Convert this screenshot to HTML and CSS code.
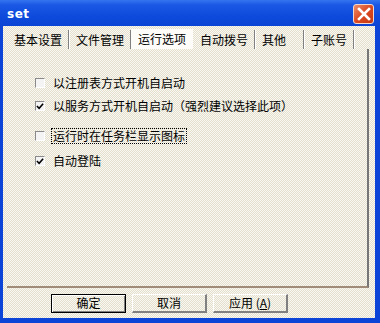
FILE: index.html
```html
<!DOCTYPE html>
<html>
<head>
<meta charset="utf-8">
<link rel="stylesheet" href="styles.css">
</head>
<body>
<div class="window">
  <div class="titlebar">
    <span class="title">set</span>
    <span class="close">
      <svg width="14" height="14" viewBox="0 0 14 14"><path d="M2 2 L12 12 M12 2 L2 12" stroke="#fff" stroke-width="2.6" stroke-linecap="square"/></svg>
    </span>
  </div>
  <div class="client">
    <div class="tabs">
      <span class="tab">基本设置</span>
      <span class="tab">文件管理</span>
      <span class="tab active">运行选项</span>
      <span class="tab">自动拨号</span>
      <span class="tab">其他</span>
      <span class="tab">子账号</span>
    </div>
    <div class="panel">
      <div class="opt opt1"><span class="box"></span><span class="label">以注册表方式开机自启动</span></div>
      <div class="opt opt2"><span class="box checked"><svg width="9" height="9" viewBox="0 0 9 9"><path d="M1 4 L3.5 6.5 L8 1.5" fill="none" stroke="#000" stroke-width="1.8"/></svg></span><span class="label">以服务方式开机自启动（强烈建议选择此项）</span></div>
      <div class="opt opt3"><span class="box"></span><span class="label focus">运行时在任务栏显示图标</span></div>
      <div class="opt opt4"><span class="box checked"><svg width="9" height="9" viewBox="0 0 9 9"><path d="M1 4 L3.5 6.5 L8 1.5" fill="none" stroke="#000" stroke-width="1.8"/></svg></span><span class="label">自动登陆</span></div>
    </div>
    <div class="buttons">
      <span class="btn default">确定</span>
      <span class="btn">取消</span>
      <span class="btn">应用 (<u>A</u>)</span>
    </div>
  </div>
</div>
</body>
</html>
```
FILE: styles.css
```css
html, body { margin: 0; padding: 0; }
body { width: 380px; height: 323px; overflow: hidden; font-family: "Noto Sans CJK SC", "Noto Sans", sans-serif; font-size: 12px; color: #000; }
.window {
  width: 380px; height: 323px; box-sizing: border-box;
  background: #0b44d6;
  display: flex; flex-direction: column;
}
.titlebar {
  height: 26px; flex: none;
  display: flex; align-items: center; justify-content: space-between;
  padding: 0 6px 0 7px;
  background: linear-gradient(#3574f0 0, #1a58e4 5px, #0e4bdc 16px, #0a44d4 26px);
}
.title { color: #fff; font-family: "DejaVu Sans", sans-serif; font-weight: bold; font-size: 12px; letter-spacing: 0.5px; margin-top: 2px; }
.close {
  width: 21px; height: 20px; box-sizing: border-box;
  border: 1px solid #f4d8cc; border-radius: 3px;
  background: linear-gradient(135deg, #ec8e6c, #dc4a22 50%, #c43812);
  display: flex; align-items: center; justify-content: center;
  margin-top: 1px;
}
.client {
  flex: 1; margin: 0 5px 5px 3px;
  background: repeating-conic-gradient(#f9f8f2 0 25%, #e3dfcc 0 50%) 0 0 / 2px 2px;
  display: flex; flex-direction: column;
}
.tabs { display: flex; height: 19px; margin-top: 4px; padding-left: 5px; align-items: stretch; }
.tab {
  padding: 0 6px; min-width: 35px; box-sizing: content-box;
  display: flex; align-items: center; line-height: 12px;
  border-right: 1px solid #808080; box-shadow: 1px 0 0 #fff;
  margin-right: 1px;
}
.tab.active {
  padding: 0 7px; background: #fdfcf8; border-right: none; box-shadow: none;
  margin-left: -1px; margin-top: -1px;
}
.panel {
  flex: 1; margin: 0 6px 0 4px;
  border-right: 2px solid #767676; border-bottom: 2px solid #a08a78;
  padding: 28px 0 0 28px;
  display: flex; flex-direction: column;
}
.opt { display: flex; align-items: center; height: 12px; }
.opt2 { margin-top: 11px; }
.opt3 { margin-top: 18px; }
.opt4 { margin-top: 13px; }
.box {
  width: 10px; height: 10px; box-sizing: border-box;
  border-top: 1px solid #8a8a8a; border-left: 1px solid #8a8a8a;
  border-right: 1px solid #fff; border-bottom: 1px solid #fff;
  background: #f4f4f4; margin-right: 8px; flex: none;
  display: flex; align-items: center; justify-content: center;
}
.label { line-height: 12px; }
.focus { outline: 1px dotted #000; outline-offset: 1px; }
.buttons { height: 30px; flex: none; display: flex; align-items: center; padding-left: 48px; gap: 6px; }
.btn {
  width: 75px; height: 19px; box-sizing: border-box;
  display: flex; align-items: center; justify-content: center;
  border-top: 1px solid #fff; border-left: 1px solid #fff;
  border-right: 2px solid #808080; border-bottom: 2px solid #808080;
  line-height: 12px; white-space: pre;
}
.btn.default { border: 1px solid #000; box-shadow: inset 1px 1px 0 #fff, inset -1px -1px 0 #808080; }
```
